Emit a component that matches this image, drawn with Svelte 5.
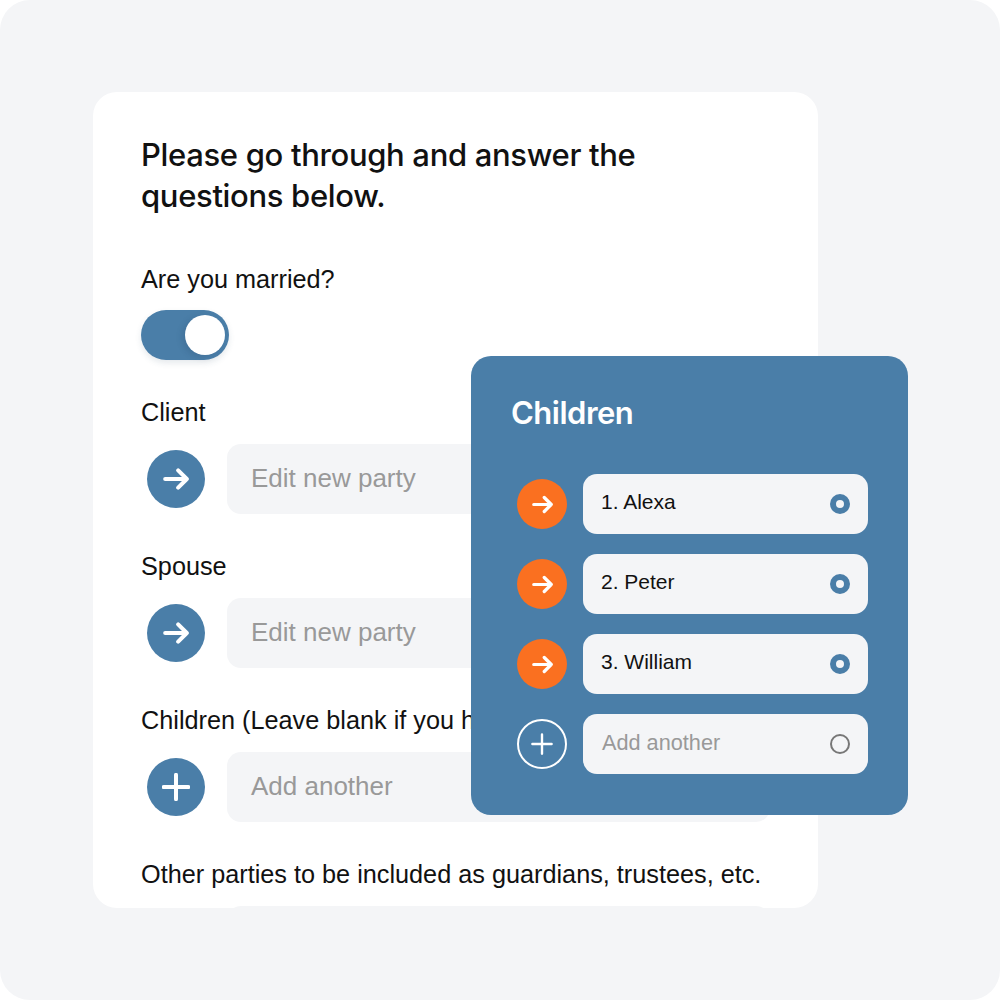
<script>
  const children = ['1. Alexa', '2. Peter', '3. William'];
</script>

{#snippet arrow(size)}
  <svg width={size} height={size} viewBox="0 0 24 24" fill="none" stroke="#fff" stroke-width="3.7" stroke-linecap="round" stroke-linejoin="round" aria-hidden="true">
    <path d="M2 12H22M14 4 22 12 14 20" />
  </svg>
{/snippet}

{#snippet plus(size, sw)}
  <svg width={size} height={size} viewBox="0 0 24 24" fill="none" stroke="#fff" stroke-width={sw} stroke-linecap="round" aria-hidden="true">
    <path d="M12 1.500v21M1.500 12h21" />
  </svg>
{/snippet}

<div class="page">
  <main class="card">
    <h1>Please go through and answer the<br />questions below.</h1>

    <section class="first">
      <div class="label">Are you married?</div>
      <div class="toggle"><span class="knob"></span></div>
    </section>

    <section>
      <div class="label">Client</div>
      <div class="row">
        <span class="circle">{@render arrow(26)}</span>
        <div class="field">Edit new party</div>
      </div>
    </section>

    <section>
      <div class="label">Spouse</div>
      <div class="row">
        <span class="circle">{@render arrow(26)}</span>
        <div class="field">Edit new party</div>
      </div>
    </section>

    <section>
      <div class="label">Children (Leave blank if you have no children)</div>
      <div class="row">
        <span class="circle">{@render plus(28, 3.4)}</span>
        <div class="field">Add another</div>
      </div>
    </section>

    <section>
      <div class="label">Other parties to be included as guardians, trustees, etc.</div>
      <div class="row">
        <div class="field stub"></div>
      </div>
    </section>
  </main>

  <aside class="panel">
    <h2>Children</h2>
    <div class="list">
      {#each children as child}
        <div class="item">
          <span class="dot">{@render arrow(21)}</span>
          <div class="entry">
            <span>{child}</span>
            <span class="radio on"></span>
          </div>
        </div>
      {/each}
      <div class="item">
        <span class="dot outline">{@render plus(22, 2.6)}</span>
        <div class="entry muted">
          <span>Add another</span>
          <span class="radio"></span>
        </div>
      </div>
    </div>
  </aside>
</div>

<style>
  :global(body) {
    margin: 0;
    background: #fff;
  }
  .page {
    position: relative;
    box-sizing: border-box;
    width: 1000px;
    height: 1000px;
    padding: 92px 182px 92px 93px;
    background: #f4f5f7;
    border-radius: 30px;
    overflow: hidden;
    font-family: "Liberation Sans", Arial, sans-serif;
    color: #111;
  }
  .card {
    box-sizing: border-box;
    height: 816px;
    padding: 42px 48px 0;
    background: #fff;
    border-radius: 24px;
    overflow: hidden;
  }
  h1 {
    margin: 0;
    font-family: Inter, "Liberation Sans", sans-serif;
    font-size: 31px;
    line-height: 41px;
    font-weight: 500;
    letter-spacing: -0.33px;
  }
  section {
    margin-top: 37px;
  }
  section.first {
    margin-top: 48px;
  }
  .label {
    font-size: 25.25px;
    line-height: 30px;
    white-space: nowrap;
  }
  .toggle {
    display: flex;
    align-items: center;
    justify-content: flex-end;
    box-sizing: border-box;
    width: 88px;
    height: 50px;
    margin-top: 16px;
    padding-right: 4px;
    border-radius: 25px;
    background: #4a7ea8;
    box-shadow: 0 3px 6px rgba(40, 70, 100, 0.12);
  }
  .knob {
    width: 40px;
    height: 40px;
    border-radius: 50%;
    background: #fff;
    box-shadow: -3px 2px 6px rgba(30, 50, 80, 0.15);
  }
  .row {
    display: flex;
    align-items: center;
    gap: 22px;
    margin-top: 17px;
    padding-left: 6px;
  }
  .circle {
    display: flex;
    align-items: center;
    justify-content: center;
    flex: none;
    width: 58px;
    height: 58px;
    border-radius: 50%;
    background: #4a7ea8;
  }
  .field {
    flex: 1;
    box-sizing: border-box;
    height: 70px;
    padding: 0 24px 2px;
    display: flex;
    align-items: center;
    border-radius: 14px;
    background: #f4f5f7;
    color: #999;
    font-size: 26px;
  }
  .field.stub {
    margin-left: 80px;
  }
  .panel {
    position: absolute;
    left: 471px;
    top: 356px;
    box-sizing: border-box;
    width: 437px;
    height: 459px;
    padding: 38px 40px 0 46px;
    border-radius: 20px;
    background: #4a7ea8;
    color: #fff;
  }
  h2 {
    margin: 0 0 0 -6px;
    font-family: Inter, "Liberation Sans", sans-serif;
    font-size: 31px;
    line-height: 38px;
    font-weight: 600;
    letter-spacing: -0.5px;
  }
  .list {
    display: flex;
    flex-direction: column;
    gap: 20px;
    margin-top: 42px;
  }
  .item {
    display: flex;
    align-items: center;
    gap: 16px;
  }
  .dot {
    display: flex;
    align-items: center;
    justify-content: center;
    flex: none;
    box-sizing: border-box;
    width: 50px;
    height: 50px;
    border-radius: 50%;
    background: #fa7020;
  }
  .dot.outline {
    background: none;
    border: 2.500px solid #fff;
  }
  .entry {
    flex: 1;
    display: flex;
    align-items: center;
    justify-content: space-between;
    box-sizing: border-box;
    height: 60px;
    padding: 0 18px;
    border-radius: 14px;
    background: #f4f5f7;
    color: #111;
    font-size: 21px;
  }
  .entry > span:first-child {
    position: relative;
    top: -2px;
  }
  .entry.muted {
    color: #999;
    font-size: 21.700px;
    padding-left: 19px;
  }
  .entry.muted > span:first-child {
    top: -1px;
  }
  .radio {
    box-sizing: border-box;
    width: 20px;
    height: 20px;
    border-radius: 50%;
    border: 2px solid #777;
  }
  .radio.on {
    border: 6.500px solid #4a7ea8;
    background: #f4f5f7;
  }
</style>
